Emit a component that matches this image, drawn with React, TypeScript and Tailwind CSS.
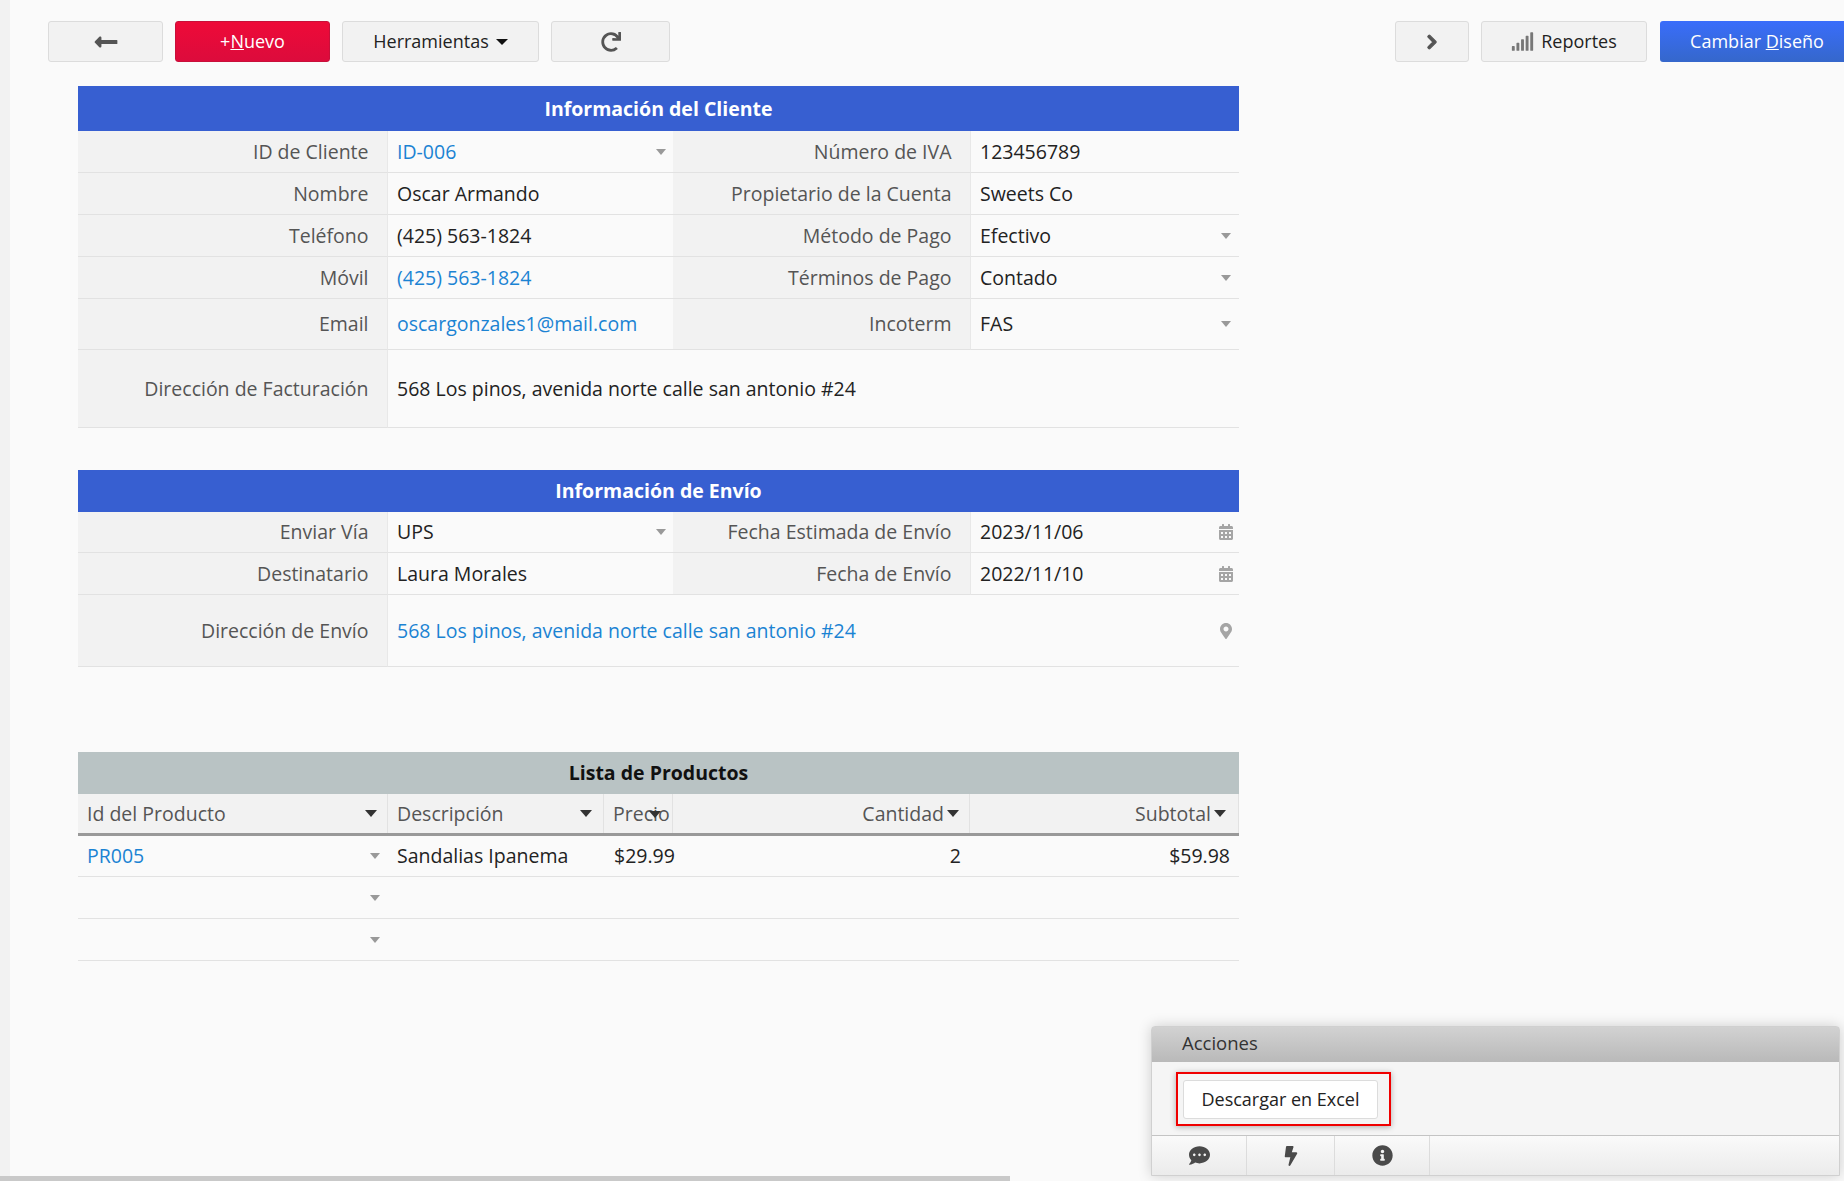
import type { ReactNode } from "react";
import { FaBolt, FaCalendarAlt, FaChevronRight, FaCommentDots, FaInfoCircle, FaLongArrowAltLeft, FaMapMarkerAlt, FaRedo, FaSignal } from "react-icons/fa";

const cols = "grid grid-cols-[309px_286px_297px_269px]";
const prodCols = "grid grid-cols-[310px_216px_69px_297px_269px]";

function Caret({ dark, className }: { dark?: boolean; className?: string }) {
  if (dark) return <span className="inline-block border-x-[6px] border-t-[7px] border-x-transparent border-t-[#333]" />;
  return <span className={`inline-block border-x-[5px] border-t-[6px] border-x-transparent border-t-[#999] ${className ?? ""}`} />;
}

function Label({ children, h }: { children: ReactNode; h: string }) {
  return <div className={`${h} flex items-center justify-end bg-[#f2f2f2] pr-[18.5px] border-b border-[#e2e2e2] text-[#555]`}>{children}</div>;
}

function Value({ children, link, icon, h, span }: { children?: ReactNode; link?: boolean; icon?: ReactNode; h: string; span?: boolean }) {
  return (
    <div className={`${h} ${span ? "col-span-3" : ""} flex items-center justify-between pl-[9px] pr-[8px] border-b border-l border-b-[#e2e2e2] border-l-[#e8e8e8] whitespace-nowrap ${link ? "text-[#1b83d3]" : "text-[#222]"}`}>
      <span>{children}</span>
      {icon}
    </div>
  );
}

function Title({ children, h }: { children: ReactNode; h: string }) {
  return <div className={`${h} flex items-center justify-center bg-[#375fd1] text-white font-bold`}>{children}</div>;
}

function ToolBtn({ children, w }: { children: ReactNode; w: string }) {
  return <button className={`${w} h-[41px] flex items-center justify-center rounded-[3px] border border-[#dcdcdc] bg-[#f2f2f2] text-[18px] text-[#222]`}>{children}</button>;
}

function ThCell({ children, right, pr }: { children: ReactNode; right?: boolean; pr: string }) {
  return <div className={`relative h-[39px] flex items-center pl-[9px] ${pr} bg-[#f2f2f2] border-r border-[#e2e2e2] text-[#555] ${right ? "justify-end gap-[3px]" : "justify-between"}`}>{children}</div>;
}

function ProductRow({ id, desc, price, qty, total, h }: { id?: string; desc?: string; price?: string; qty?: string; total?: string; h: string }) {
  return (
    <div className={`${prodCols} ${h} items-center border-b border-[#e2e2e2] text-[#222] whitespace-nowrap`}>
      <div className="flex items-center justify-between pl-[9px] pr-[8px]">
        <span className="text-[#1b83d3]">{id}</span>
        <Caret />
      </div>
      <div className="pl-[9px]">{desc}</div>
      <div className="pl-[10px]">{price}</div>
      <div className="text-right pr-[9px]">{qty}</div>
      <div className="text-right pr-[9px]">{total}</div>
    </div>
  );
}

export default function App() {
  const cal = <FaCalendarAlt className="text-[16px] text-[#a5a5a5] -mr-[3px]" />;
  return (
    <div className="relative flex h-[1181px] w-full overflow-hidden bg-[#fafafa] text-[19.5px] font-['Open_Sans',sans-serif]">
      <div className="w-[10px] shrink-0 bg-[#f2f2f2]" />
      <div className="flex-1 min-w-0">
        {/* toolbar */}
        <div className="flex items-center justify-between pt-[21px] pl-[38px]">
          <div className="flex gap-[12px]">
            <ToolBtn w="w-[115px]"><FaLongArrowAltLeft className="text-[26px] text-[#555]" /></ToolBtn>
            <button className="w-[155px] h-[41px] rounded-[3px] border border-[#c8103a] bg-gradient-to-b from-[#ee0a38] to-[#dc0b3c] text-[18px] text-white">+<u>N</u>uevo</button>
            <ToolBtn w="w-[197px]"><span>Herramientas</span><span className="ml-[7px] inline-block border-x-[6px] border-t-[6px] border-x-transparent border-t-[#111]" /></ToolBtn>
            <ToolBtn w="w-[119px]"><FaRedo className="text-[20px] text-[#555]" /></ToolBtn>
          </div>
          <div className="flex gap-[12px]">
            <ToolBtn w="w-[74px]"><FaChevronRight className="text-[16px] text-[#555] stroke-[40px]" /></ToolBtn>
            <div className="mr-[1px]">
              <ToolBtn w="w-[166px]"><FaSignal className="text-[23px] text-[#777] mr-[7px]" />Reportes</ToolBtn>
            </div>
            <button className="w-[184px] h-[41px] pl-[10px] rounded-l-[3px] bg-gradient-to-b from-[#3a6dfb] to-[#3567cb] text-[18px] text-white whitespace-nowrap">Cambiar <u>D</u>iseño</button>
          </div>
        </div>

        <div className="w-[1161px] ml-[68px] mt-[24px]">
          {/* cliente */}
          <Title h="h-[45px]">Información del Cliente</Title>
          <div className={cols}>
            <Label h="h-[42px]">ID de Cliente</Label>
            <Value h="h-[42px]" link icon={<Caret className="-mr-[1px]" />}>ID-006</Value>
            <Label h="h-[42px]">Número de IVA</Label>
            <Value h="h-[42px]">123456789</Value>
            <Label h="h-[42px]">Nombre</Label>
            <Value h="h-[42px]">Oscar Armando</Value>
            <Label h="h-[42px]">Propietario de la Cuenta</Label>
            <Value h="h-[42px]">Sweets Co</Value>
            <Label h="h-[42px]">Teléfono</Label>
            <Value h="h-[42px]">(425) 563-1824</Value>
            <Label h="h-[42px]">Método de Pago</Label>
            <Value h="h-[42px]" icon={<Caret />}>Efectivo</Value>
            <Label h="h-[42px]">Móvil</Label>
            <Value h="h-[42px]" link>(425) 563-1824</Value>
            <Label h="h-[42px]">Términos de Pago</Label>
            <Value h="h-[42px]" icon={<Caret />}>Contado</Value>
            <Label h="h-[51px]">Email</Label>
            <Value h="h-[51px]" link>oscargonzales1@mail.com</Value>
            <Label h="h-[51px]">Incoterm</Label>
            <Value h="h-[51px]" icon={<Caret />}>FAS</Value>
            <Label h="h-[78px]">Dirección de Facturación</Label>
            <Value h="h-[78px]" span>568 Los pinos, avenida norte calle san antonio #24</Value>
          </div>

          {/* envio */}
          <div className="mt-[42px]">
            <Title h="h-[42px]">Información de Envío</Title>
            <div className={cols}>
              <Label h="h-[41px]">Enviar Vía</Label>
              <Value h="h-[41px]" icon={<Caret className="-mr-[1px]" />}>UPS</Value>
              <Label h="h-[41px]">Fecha Estimada de Envío</Label>
              <Value h="h-[41px]" icon={cal}>2023/11/06</Value>
              <Label h="h-[42px]">Destinatario</Label>
              <Value h="h-[42px]">Laura Morales</Value>
              <Label h="h-[42px]">Fecha de Envío</Label>
              <Value h="h-[42px]" icon={cal}>2022/11/10</Value>
              <Label h="h-[72px]">Dirección de Envío</Label>
              <Value h="h-[72px]" span link icon={<FaMapMarkerAlt className="text-[16px] text-[#a5a5a5] -mr-[3px]" />}>568 Los pinos, avenida norte calle san antonio #24</Value>
            </div>
          </div>

          {/* productos */}
          <div className="mt-[85px]">
            <div className="h-[42px] flex items-center justify-center bg-[#b9c3c4] text-[#111] font-bold">Lista de Productos</div>
            <div className={`${prodCols} border-b-[3px] border-[#999]`}>
              <ThCell pr="pr-[10px]">Id del Producto<Caret dark /></ThCell>
              <ThCell pr="pr-[11px]">Descripción<Caret dark /></ThCell>
              <ThCell pr="pr-[9px]">Precio<span className="absolute right-[11px] top-[17px] flex"><Caret dark /></span></ThCell>
              <ThCell right pr="pr-[10px]">Cantidad<Caret dark /></ThCell>
              <ThCell right pr="pr-[12px]">Subtotal<Caret dark /></ThCell>
            </div>
            <ProductRow h="h-[41px]" id="PR005" desc="Sandalias Ipanema" price="$29.99" qty="2" total="$59.98" />
            <ProductRow h="h-[42px]" />
            <ProductRow h="h-[42px]" />
          </div>
        </div>
      </div>

      {/* panel de acciones */}
      <div className="absolute left-[1151px] top-[1026px] w-[689px] h-[150px] flex flex-col rounded-t-[4px] border border-[#d0d0d0] bg-[#f5f5f5] shadow-[0_0_14px_rgba(0,0,0,0.18)]">
        <div className="h-[35px] shrink-0 flex items-center pl-[30px] pb-[3px] bg-gradient-to-b from-[#d2d2d2] to-[#b9b9b9] text-[18.5px] text-[#333]">Acciones</div>
        <div className="flex-1 pt-[10px] pl-[24px]">
          <div className="inline-flex pt-[6px] pb-[5px] pl-[5px] pr-[11px] border-2 border-[#f00000] shadow-[0_1px_6px_rgba(0,0,0,0.3)]">
            <button className="w-[195px] h-[39px] rounded-[3px] border border-[#dcdcdc] bg-white text-[18px] text-[#222]">Descargar en Excel</button>
          </div>
        </div>
        <div className="h-[40px] shrink-0 flex border-t border-[#c4c4c4] bg-gradient-to-b from-[#fafafa] to-[#ebebeb] text-[#4a4a4a]">
          <div className="w-[95px] flex items-center justify-center border-r border-[#dcdcdc]"><FaCommentDots className="text-[21px]" /></div>
          <div className="w-[88px] flex items-center justify-center border-r border-[#dcdcdc]"><FaBolt className="text-[20px]" /></div>
          <div className="w-[95px] flex items-center justify-center border-r border-[#dcdcdc]"><FaInfoCircle className="text-[21px]" /></div>
        </div>
      </div>

      {/* scrollbar */}
      <div className="absolute left-0 bottom-0 w-[1010px] h-[5px] bg-[#c9c9c9]" />
    </div>
  );
}
